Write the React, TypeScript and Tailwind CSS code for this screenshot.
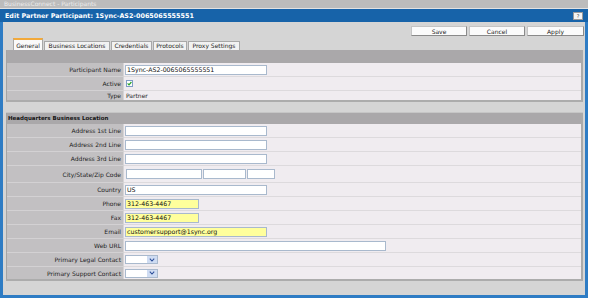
import React from "react";

function Input({ w, yellow, text }: { w: string; yellow?: boolean; text?: string }) {
  return (
    <div
      className={
        "h-[10px] border border-[#a9b9cd] text-[6.25px] leading-[8px] pl-[1px] text-[#111] whitespace-nowrap overflow-hidden " +
        (yellow ? "bg-[#ffff9c] " : "bg-white ") +
        w
      }
    >
      {text}
    </div>
  );
}

function Select() {
  return (
    <div className="flex h-[9px] w-[33px] border border-[#a9b9cd] bg-white">
      <div className="flex-1" />
      <div className="w-[10px] bg-[#cfdcf2] flex items-center justify-center">
        <svg width="6" height="4" viewBox="0 0 6 4">
          <path d="M0.8 0.6 L3 3 L5.2 0.6" stroke="#2d4f9a" strokeWidth="1.1" fill="none" />
        </svg>
      </div>
    </div>
  );
}

function Row({
  label,
  h,
  last,
  children,
}: {
  label: string;
  h: string;
  last?: boolean;
  children?: React.ReactNode;
}) {
  return (
    <div className={"flex " + h}>
      <div
        className={
          "w-[117px] shrink-0 bg-[#c2c0c2] border-r border-[#d6d4d6] flex items-center justify-end pr-[2px] text-[6px] text-[#1e1e1e] " +
          (last ? "" : "border-b border-b-[#d3d1d3]")
        }
      >
        {label}
      </div>
      <div
        className={
          "flex-1 bg-[#f0ecf0] flex items-center pl-[1px] gap-[2px] text-[6px] text-[#1e1e1e] " +
          (last ? "" : "border-b border-b-[#dddadd]")
        }
      >
        {children}
      </div>
    </div>
  );
}

export default function App() {
  return (
    <div className="w-[591px] h-[301px] bg-white overflow-hidden font-['DejaVu_Sans',Verdana,sans-serif]">
      <div className="w-[588px] h-[9px] bg-[#bcbcbc] border-b border-[#e2e2e2] text-[6px] leading-[8px] text-[#ececec] pl-[4px]">
        BusinessConnect - Participants
      </div>
      <div className="w-[588px] flex flex-col">
        <div className="h-[13px] bg-[#1763a9] flex items-center justify-between pl-[5px] pr-[5px]">
          <span className="text-white font-bold text-[6.4px] leading-[8px]">
            Edit Partner Participant: 1Sync-AS2-0065065555551
          </span>
          <div className="w-[10px] h-[8px] bg-[#f4f4f4] border border-[#9a9a9a] text-[5px] leading-[6px] text-[#333] flex items-center justify-center">
            ?
          </div>
        </div>
        <div className="h-[276px] bg-[#d5d5d5] border-l-[3px] border-r-[3px] border-b-[3px] border-[#2e7cc4] flex flex-col">
          <div className="flex justify-end pt-[4px] pr-[1px] gap-[2px]">
            {["Save", "Cancel", "Apply"].map((b, i) => (
              <div
                key={b}
                className={
                  "h-[10px] bg-[#fbfbfb] border border-[#c4c4c4] border-r-[#8a8a8a] border-b-[#8a8a8a] flex items-center justify-center text-[6px] text-[#222] " +
                  (i === 2 ? "w-[57px]" : "w-[56px]")
                }
              >
                {b}
              </div>
            ))}
          </div>
          <div className="mt-[2px] pl-[10px] flex items-end h-[12px] gap-[1px]">
            <div className="h-[12px] w-[30px] bg-[#fafafa] border-t-2 border-t-[#f2a93a] border-x border-x-[#a8a8a8] flex items-end justify-center text-[6px] leading-[9px] text-[#222]">
              General
            </div>
            {[
              ["Business Locations", "w-[66px]"],
              ["Credentials", "w-[41px]"],
              ["Protocols", "w-[34px]"],
              ["Proxy Settings", "w-[52px]"],
            ].map(([t, w]) => (
              <div
                key={t}
                className={
                  "h-[9px] bg-[#f2f2f2] border-t border-x border-[#a8a8a8] flex items-center justify-center text-[6px] leading-[8px] text-[#222] " +
                  w
                }
              >
                {t}
              </div>
            ))}
          </div>
          <div className="ml-[3px] mr-[2px] flex flex-col">
            <div className="border-l border-[#a4a4a4] border-r-2 border-r-[#aaaaaa] border-b-2 border-b-[#acacac]">
              <div className="h-[13px] bg-[#aaa8aa]" />
              <Row label="Participant Name" h="h-[14px]">
                <Input w="w-[142px]" text="1Sync-AS2-0065065555551" />
              </Row>
              <Row label="Active" h="h-[14px]">
                <div className="ml-[1px] w-[7px] h-[7px] border border-[#7f9cc4] bg-white flex items-center justify-center">
                  <svg width="5" height="5" viewBox="0 0 5 5">
                    <path d="M0.6 2.4 L2 3.8 L4.4 1" stroke="#26a326" strokeWidth="1.2" fill="none" />
                  </svg>
                </div>
              </Row>
              <Row label="Type" h="h-[9px]" last>
                <span className="pl-[1px] leading-[8px]">Partner</span>
              </Row>
            </div>
            <div className="h-[11px] border-b border-[#c6c6c6]" />
            <div className="border-l border-[#a4a4a4] border-r-2 border-r-[#aaaaaa] border-b-2 border-b-[#acacac]">
              <div className="h-[11px] bg-[#aaa8aa] flex items-center pl-[1px] text-[5.5px] font-bold text-[#151515]">
                Headquarters Business Location
              </div>
              <Row label="Address 1st Line" h="h-[14px]">
                <Input w="w-[142px]" />
              </Row>
              <Row label="Address 2nd Line" h="h-[14px]">
                <Input w="w-[142px]" />
              </Row>
              <Row label="Address 3rd Line" h="h-[14px]">
                <Input w="w-[142px]" />
              </Row>
              <Row label="City/State/Zip Code" h="h-[17px]">
                <div className="ml-[1px] flex gap-[1px]">
                  <Input w="w-[76px]" />
                  <Input w="w-[43px]" />
                  <Input w="w-[28px]" />
                </div>
              </Row>
              <Row label="Country" h="h-[14px]">
                <Input w="w-[142px]" text="US" />
              </Row>
              <Row label="Phone" h="h-[14px]">
                <Input w="w-[74px]" yellow text="312-463-4467" />
              </Row>
              <Row label="Fax" h="h-[14px]">
                <Input w="w-[74px]" yellow text="312-463-4467" />
              </Row>
              <Row label="Email" h="h-[14px]">
                <Input w="w-[142px]" yellow text="customersupport@1sync.org" />
              </Row>
              <Row label="Web URL" h="h-[14px]">
                <Input w="w-[261px]" />
              </Row>
              <Row label="Primary Legal Contact" h="h-[14px]">
                <Select />
              </Row>
              <Row label="Primary Support Contact" h="h-[12px]" last>
                <Select />
              </Row>
            </div>
          </div>
        </div>
      </div>
    </div>
  );
}
